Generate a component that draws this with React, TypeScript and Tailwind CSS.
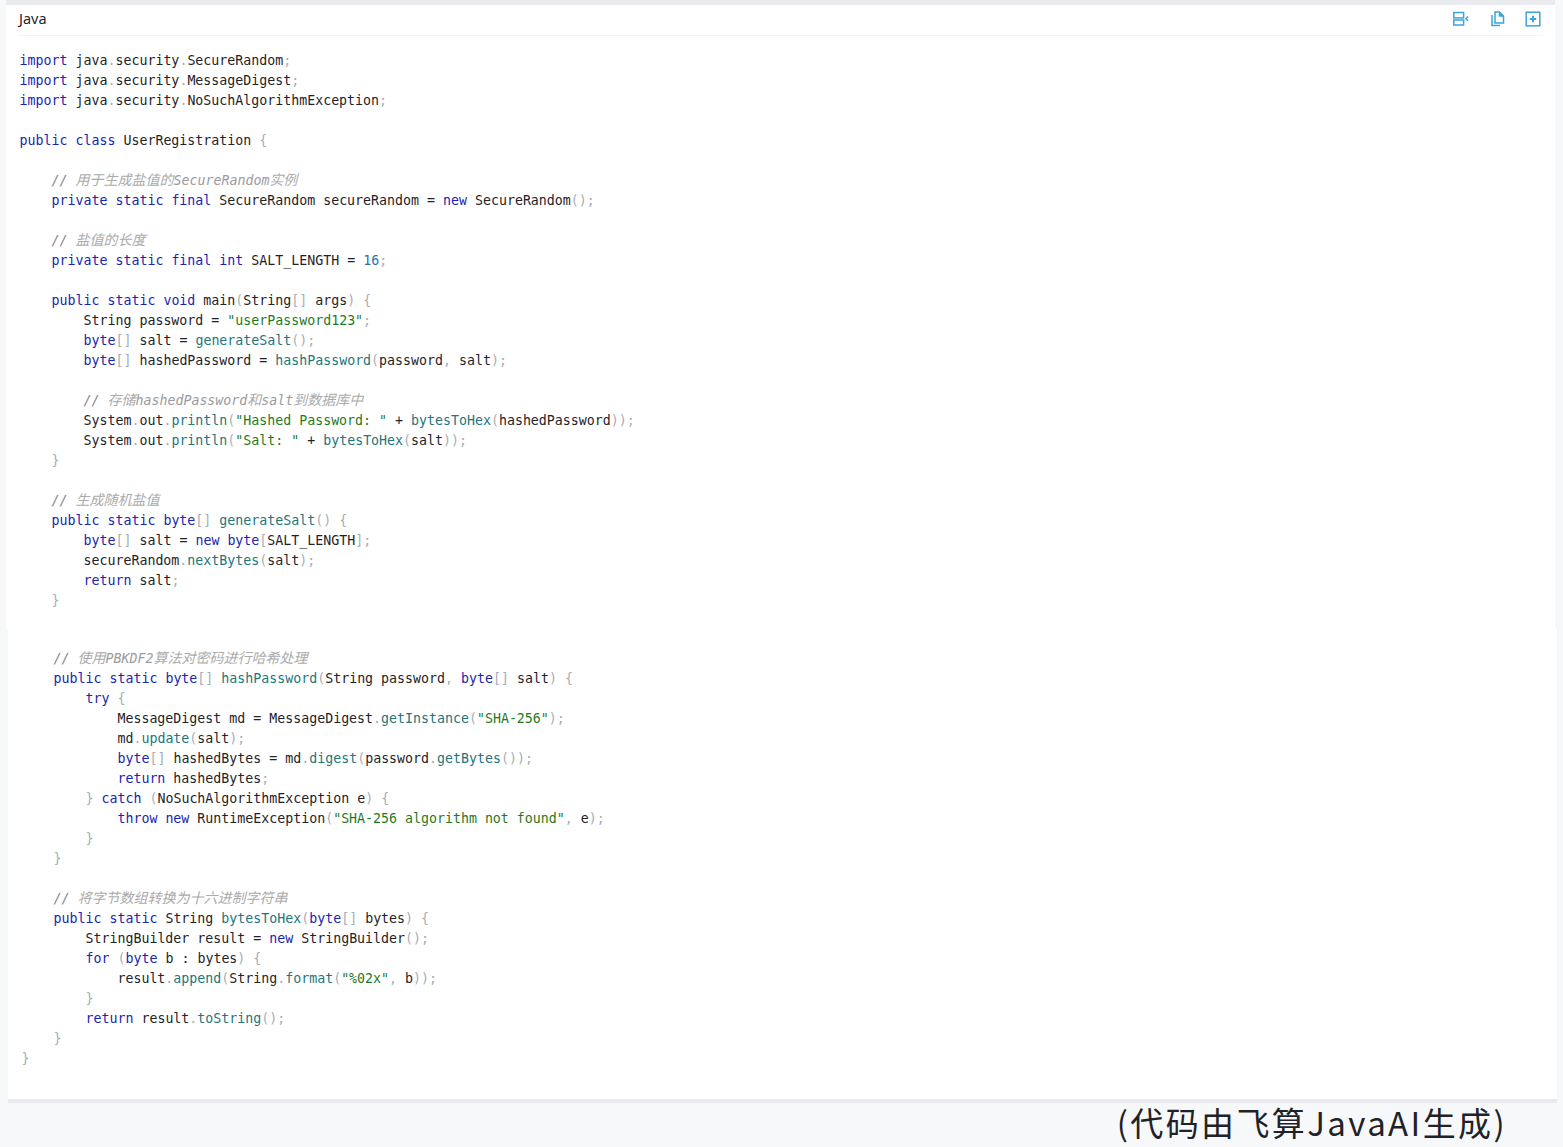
import React from "react";

const kw = new Set(["import","public","class","private","static","final","new","int","void","byte","return","try","catch","throw","for"]);
const fns = new Set(["generateSalt","hashPassword","bytesToHex","println","nextBytes","getInstance","update","digest","getBytes","append","format","toString"]);

function Code({ line }: { line: string }) {
  const t = line.trimStart();
  const indent = line.length - t.length;
  if (t.startsWith("//")) {
    const parts = t.slice(2).split(/([\u4e00-\u9fff]+)/);
    return (
      <div className="-mt-[2px] mb-[2px] h-5 whitespace-pre italic text-[#9a9b9f]">
        {" ".repeat(indent)}<span className="text-[#85868a]">//</span>
        {parts.map((p, i) =>
          /[\u4e00-\u9fff]/.test(p) ? (
            <span key={i} className="text-[14px] text-[#ababab] [font-family:'Noto_Sans_CJK_SC',sans-serif]">{p}</span>
          ) : (
            <span key={i}>{p}</span>
          )
        )}
      </div>
    );
  }
  const toks = line.match(/"[^"]*"|[A-Za-z_][A-Za-z_0-9]*|\d+|\s+|./g) || [];
  return (
    <div className="h-5 whitespace-pre text-[#1f2329]">
      {line === "" ? " " : toks.map((tk, i) => {
        let c = "";
        if (kw.has(tk)) c = "text-[#1a25b0]";
        else if (fns.has(tk)) c = "text-[#22767d]";
        else if (tk[0] === '"') c = "text-[#1f7a1f]";
        else if (/^\d+$/.test(tk)) c = "text-[#2a6fb0]";
        else if (/^[.;,()\[\]{}]$/.test(tk)) c = "text-[#a8adb5]";
        return <span key={i} className={c}>{tk}</span>;
      })}
    </div>
  );
}

const first = `import java.security.SecureRandom;
import java.security.MessageDigest;
import java.security.NoSuchAlgorithmException;

public class UserRegistration {

    // 用于生成盐值的SecureRandom实例
    private static final SecureRandom secureRandom = new SecureRandom();

    // 盐值的长度
    private static final int SALT_LENGTH = 16;

    public static void main(String[] args) {
        String password = "userPassword123";
        byte[] salt = generateSalt();
        byte[] hashedPassword = hashPassword(password, salt);

        // 存储hashedPassword和salt到数据库中
        System.out.println("Hashed Password: " + bytesToHex(hashedPassword));
        System.out.println("Salt: " + bytesToHex(salt));
    }

    // 生成随机盐值
    public static byte[] generateSalt() {
        byte[] salt = new byte[SALT_LENGTH];
        secureRandom.nextBytes(salt);
        return salt;
    }`.split("\n");

const second = `    // 使用PBKDF2算法对密码进行哈希处理
    public static byte[] hashPassword(String password, byte[] salt) {
        try {
            MessageDigest md = MessageDigest.getInstance("SHA-256");
            md.update(salt);
            byte[] hashedBytes = md.digest(password.getBytes());
            return hashedBytes;
        } catch (NoSuchAlgorithmException e) {
            throw new RuntimeException("SHA-256 algorithm not found", e);
        }
    }

    // 将字节数组转换为十六进制字符串
    public static String bytesToHex(byte[] bytes) {
        StringBuilder result = new StringBuilder();
        for (byte b : bytes) {
            result.append(String.format("%02x", b));
        }
        return result.toString();
    }
}`.split("\n");

export default function App() {
  return (
    <div className="h-[1147px] w-[1563px] overflow-hidden bg-[#f7f8fa] [font-family:'DejaVu_Sans_Mono','Noto_Sans_CJK_SC',monospace] text-[13.28px] leading-5">
      <div className="ml-[6px] h-[629px] w-[1549px] border-t-[5px] border-[#e9ebef] bg-white">
        <div className="mx-3 flex h-[31px] items-center justify-between border-b border-[#f2f3f5] pb-[2px] [font-family:'Noto_Sans',sans-serif] text-[14.5px] text-[#1f2329]">
          <span className="mb-[2px] ml-px">Java</span>
          <div className="mr-[2px] flex items-center gap-[21px] text-[#3ca3dc]">
            <svg width="16" height="16" viewBox="0 0 16 16" fill="none" stroke="currentColor" strokeWidth="1.5">
              <rect x="0.8" y="1.5" width="9.8" height="5.4" />
              <rect x="0.8" y="9" width="9.8" height="5" />
              <path d="M15 5.6 13 7.7 15 9.8" />
            </svg>
            <svg width="16" height="16" viewBox="0 0 16 16" fill="none" stroke="currentColor" strokeWidth="1.5" className="mr-[-2px]">
              <path d="M5 1H9.5L13.5 5V12H5Z" />
              <path d="M9.5 1V5H13.5" fill="currentColor" />
              <path d="M2 4V14.5H10" />
            </svg>
            <svg width="16" height="16" viewBox="0 0 16 16" fill="none" stroke="currentColor" strokeWidth="1.5">
              <rect x="1.2" y="1.2" width="13.6" height="13.6" />
              <path d="M8 4.8V11.2M4.8 8H11.2" strokeWidth="2" />
            </svg>
          </div>
        </div>
        <div className="pl-[13.6px] pt-[15px]">
          {first.map((l, i) => <Code key={i} line={l} />)}
        </div>
      </div>
      <div className="ml-2 h-[474px] w-[1549px] border-b-[4px] border-[#e9ebef] bg-white pl-[13.6px] pt-5">
        {second.map((l, i) => <Code key={i} line={l} />)}
      </div>
      <div className="mr-[56px] -mt-[3px] text-right [font-family:'Noto_Sans_CJK_SC',sans-serif] text-[33px] leading-[44px] tracking-[2.4px] text-[#1f2329]">
        (代码由飞算JavaAI生成)
      </div>
    </div>
  );
}
